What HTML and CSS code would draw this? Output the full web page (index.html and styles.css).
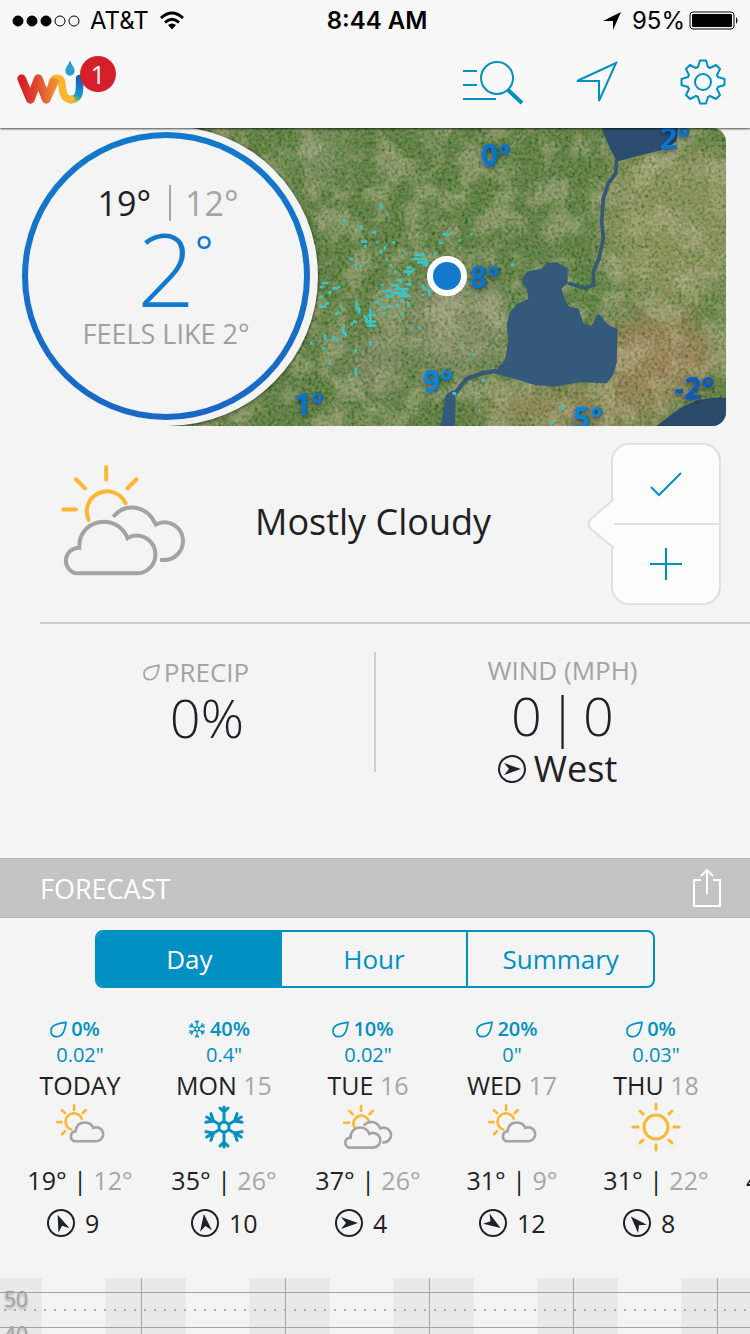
FILE: index.html
```html
<!DOCTYPE html>
<html lang="en">
<head>
  <meta charset="UTF-8">
  <meta name="viewport" content="width=device-width, initial-scale=1">
  <title>Weather</title>
  <link rel="stylesheet" href="styles.css">
</head>
<body>

  <!-- shared icons -->
  <svg class="sprite" aria-hidden="true">
    <symbol id="drop" viewBox="142 33 51 49">
      <path d="M190 36C170 38 145 44 145 61C145 72 152 79 163 79C181 79 187 60 190 36Z"/>
    </symbol>
    <symbol id="snow" viewBox="-22 -22 44 44">
      <circle r="5"/>
      <path d="M0-6V-20M-4-19L0-15L4-19"/>
      <path transform="rotate(60)" d="M0-6V-20M-5-18L0-12L5-18"/>
      <path transform="rotate(120)" d="M0-6V-20M-5-18L0-12L5-18"/>
      <path transform="rotate(180)" d="M0-6V-20M-4-19L0-15L4-19"/>
      <path transform="rotate(240)" d="M0-6V-20M-5-18L0-12L5-18"/>
      <path transform="rotate(300)" d="M0-6V-20M-5-18L0-12L5-18"/>
    </symbol>
    <symbol id="mostly-cloudy" viewBox="180 80 385 350">
      <path class="sun" d="M377 203A60 60 0 1 0 266 253M319 94V132M228 131L255 158M410 131L383 158M190 222H228"/>
      <path class="cloud" d="M228 414A39 39 0 0 1 238 337C236 290 270 259 312 259C345 259 372 280 383 308C392 302 400 300 410 300A57 57 0 0 1 410 414Z"/>
      <path class="cloud butt" d="M340 244C375 202 440 206 468 267C478 262 485 260 493 260A57 57 0 0 1 493 374H481"/>
    </symbol>
    <symbol id="partly-cloudy" viewBox="162 276 155 150">
      <path class="sun" d="M245 325A26 26 0 1 0 212 359M221 284V298M184 299L193 308M257 299L248 308M169 336H182M184 373L193 364"/>
      <path class="cloud" d="M222 395A16 16 0 0 1 226 364C228 345 240 337 254 337C268 337 277 345 281 354C285 352 288 352 290 352A21 21 0 0 1 290 395Z"/>
    </symbol>
    <symbol id="sunny" viewBox="-25 -25 50 50">
      <path class="sun" d="M12 0A12 12 0 1 1-12 0A12 12 0 1 1 12 0M0-23V-18M0 23V18M-23 0H-18M23 0H18M-16-16L-13-13M16-16L13-13M-16 16L-13 13M16 16L13 13"/>
    </symbol>
    <symbol id="arrow" viewBox="-12 -12 24 24">
      <path d="M9 0L-8-6L-3 0L-8 6Z"/>
    </symbol>
  </svg>

  <header class="top">
    <div class="status">
      <div class="carrier">
        <svg width="68" height="14" viewBox="0 0 68 14">
          <g stroke="#000" stroke-width="1"><circle cx="6" cy="7" r="5"/><circle cx="20" cy="7" r="5"/><circle cx="34" cy="7" r="5"/>
          <circle cx="48" cy="7" r="5" fill="none"/><circle cx="62" cy="7" r="5" fill="none"/></g>
        </svg>
        <span>AT&amp;T</span>
        <svg width="26" height="20" viewBox="0 0 26 20">
          <path d="M2 7Q13-3 24 7M6 11.500Q13 5 20 11.500" fill="none" stroke="#000" stroke-width="3"/>
          <path d="M9 14Q13 11 17 14L13 18.500Z"/>
        </svg>
      </div>
      <time>8:44 AM</time>
      <div class="battery">
        <svg width="20" height="20" viewBox="0 0 20 20"><path d="M19 1L1 10H11V19Z"/></svg>
        <span>95%</span>
        <svg width="49" height="20" viewBox="0 0 49 20">
          <rect x="1" y="1" width="44" height="17" rx="3" fill="none" stroke="#000"/>
          <rect x="3" y="3" width="40" height="13" rx="1"/>
          <path d="M47 6Q50 9.500 47 13Z"/>
        </svg>
      </div>
    </div>

    <nav class="toolbar">
      <a class="logo" href="#" aria-label="Weather Underground">
        <svg width="68" height="48" viewBox="52 166 204 144" fill="none" stroke-linecap="round" stroke-linejoin="round">
          <defs>
            <linearGradient id="w" x1="0" x2="1"><stop offset="0" stop-color="#d6202a"/><stop offset=".55" stop-color="#e2502f"/><stop offset="1" stop-color="#f08a35"/></linearGradient>
            <linearGradient id="u" gradientUnits="userSpaceOnUse" x1="214" y1="290" x2="240" y2="230"><stop offset="0" stop-color="#9cc23c"/><stop offset=".3" stop-color="#1b9bd0"/><stop offset="1" stop-color="#1264b0"/></linearGradient>
          </defs>
          <path d="M214 291C238 290 241 274 240 228" stroke="url(#u)" stroke-width="23"/>
          <path d="M158 238C164 224 182 222 186 240C190 262 187 289 214 291" stroke="#fbb52e" stroke-width="23"/>
          <path d="M66 228L92 290L116 228L140 290L163 238" stroke="url(#w)" stroke-width="26"/>
          <path d="M211 171C213 184 225 193 225 205A14 14 0 0 1 197 205C197 193 209 184 211 171Z" fill="#2aa0cd"/>
        </svg>
        <span class="badge">1</span>
      </a>
      <button class="tool" aria-label="Search">
        <svg width="62" height="46" viewBox="0 0 62 46" fill="none" stroke="#0090c1" stroke-width="2">
          <path d="M1 12H15M1 26H15M1 40H34"/><circle cx="35" cy="19" r="16"/><path d="M46 31L60 44" stroke-width="4"/>
        </svg>
      </button>
      <button class="tool" aria-label="Locate">
        <svg width="46" height="46" viewBox="0 0 46 46" fill="none" stroke="#0090c1" stroke-width="2">
          <path d="M42 4L3 22H25V42Z"/>
        </svg>
      </button>
      <button class="tool settings" aria-label="Settings">
        <svg width="46" height="46" viewBox="-23 -23 46 46" fill="none" stroke="#0090c1" stroke-width="2" stroke-linejoin="round">
          <circle r="8"/>
          <path d="M-5-15L-3-21.500H3L5-15L7-14L13-17L17-13L14-7L15-5L21.500-3V3L15 5L14 7L17 13L13 17L7 14L5 15L3 21.500H-3L-5 15L-7 14L-13 17L-17 13L-14 7L-15 5L-21.500 3V-3L-15-5L-14-7L-17-13L-13-17L-7-14Z"/>
        </svg>
      </button>
    </nav>
  </header>

  <section class="hero">
    <div class="map">
      <svg class="terrain" viewBox="-627 9 1680 894" preserveAspectRatio="xMaxYMid slice">
        <defs>
          <filter id="grain" x="0" y="0" width="100%" height="100%">
            <feTurbulence type="fractalNoise" baseFrequency=".1" numOctaves="4" seed="8"/>
            <feColorMatrix values="1.500 .3 0 0 -.54  .8 .6 0 0 -.26  .9 0 .3 0 -.36  0 0 0 0 1"/>
          </filter>
          <filter id="patches" x="0" y="0" width="100%" height="100%">
            <feTurbulence type="fractalNoise" baseFrequency=".012" numOctaves="5" seed="3"/>
            <feColorMatrix values="0 0 0 0 .62  0 0 0 0 .52  0 0 0 0 .36  4 0 0 0 -1.700"/>
          </filter>
          <filter id="soft" x="-50%" y="-50%" width="200%" height="200%"><feGaussianBlur stdDeviation="40"/></filter>
        </defs>
        <rect x="-627" y="9" width="1680" height="894" fill="#466a2a"/>
        <g filter="url(#soft)">
          <ellipse cx="900" cy="300" rx="220" ry="260" fill="#7c8249"/>
          <ellipse cx="850" cy="690" rx="180" ry="120" fill="#967046"/>
          <ellipse cx="600" cy="850" rx="300" ry="60" fill="#8b7545"/>
          <ellipse cx="240" cy="590" rx="160" ry="150" fill="#787f5b"/>
          <ellipse cx="-160" cy="90" rx="50" ry="80" fill="#7d8a62"/>
          <ellipse cx="0" cy="720" rx="80" ry="110" fill="#717954"/>
          <ellipse cx="650" cy="490" rx="80" ry="60" fill="#3d6e26"/>
        </g>
        <rect x="-627" y="9" width="1680" height="894" filter="url(#patches)" opacity=".4"/>
        <rect x="-627" y="9" width="1680" height="894" filter="url(#grain)" opacity=".32"/>
        <g fill="#34597a">
          <path d="M515 414L545 412L578 430V475L560 490L568 520L582 545L610 550L625 595L650 602L670 565L700 600L728 612L725 715L715 750L695 775L610 772L540 785L480 780L420 762L355 745L390 705L400 650L395 600L405 560L430 535L460 522L455 490L440 470L455 440L500 430Z"/>
          <path d="M680 9L700 60L725 110L780 95L860 75L905 50L910 9Z" fill="#2b4e70"/>
          <path d="M845 903L900 860Q960 815 1053 818V903Z" fill="#294b69"/>
          <path d="M197 903L212 810L235 795L242 820L240 903Z"/>
        </g>
        <g fill="none" stroke="#355874">
          <path d="M725 105L722 145L700 175L685 220L680 290L685 340L672 400L655 440L655 480L630 490L580 475" stroke-width="11"/>
          <path d="M365 737L320 745L275 762L240 805" stroke-width="13"/>
        </g>
        <!-- radar echoes -->
        <g fill="none" stroke="#3cc5c4" stroke-width="8">
          <path d="M18 237v16M34 268h7M4 352h6M30 362v12M52 352h8M18 374v12M83 377h6M203 328h22M191 354h14M286 328h7M250 346h6M181 381v8M32 404h6M42 420h9M58 440h7M408 419h10M106 610h6M130 610h7M262 660h6M292 689h7M322 767h7M310 856h6M526 892h12M552 843l14 10M232 805h12"/>
          <path d="M120 390h22l6-6M112 402h34M126 412h30l-8-14M144 420h14M94 428h16M86 440h24l8-10M96 448h10M66 465h12v10M48 482h18l6 14M60 492h40M20 498h30M46 504h44l-10-12M70 512h34M32 514h22M76 528h10M100 530v16M0 532h14M64 540h8M18 546h16M42 544h10M80 562v10M24 566h7M92 478h18M140 480l14 14M160 492l6 20M140 510h8M18 480h8"/>
          <path d="M-98 288h12M-42 300v14M-10 322h14M-42 350h18M-30 360v10M-78 402h12M-62 420h8M-48 424h8M-160 474h20M-166 486h12M-128 490h18M-142 502h12M-112 488l8-4M-170 516h14M-165 545h18M-150 535h12M-106 545h8M-118 570l10-10M-55 530v26M-48 546v20M-22 570h26M-30 590h32M-24 602h26M-14 550v50M-34 570l14 20M-66 590h12M-74 598h8M-96 604v24M-88 620v14M-150 628v16M-124 632v14M-118 642h10M-14 648v14M-158 670h8M-58 672v12M-136 710v10M-58 730v20M-195 655h8"/>
        </g>
      </svg>
      <span class="pin t2">2°</span>
      <span class="pin t0">0°</span>
      <span class="pin t8">8°</span>
      <span class="pin t9">9°</span>
      <span class="pin t1">1°</span>
      <span class="pin t5">5°</span>
      <span class="pin tm2">-2°</span>
      <span class="here"></span>
    </div>
    <div class="gauge">
      <p class="hilo"><span>19°</span><span class="low">12°</span></p>
      <p class="now">2<sup>°</sup></p>
      <p class="feels">FEELS LIKE 2°</p>
    </div>
  </section>

  <section class="condition">
    <svg class="big-icon"><use href="#mostly-cloudy"/></svg>
    <h1>Mostly Cloudy</h1>
    <div class="confirm">
      <svg class="beak" width="27" height="52" viewBox="0 0 27 52"><path d="M27 1L4 21Q-1 26 4 31L27 50" fill="#fcfcfc" stroke="#dfdfdf" stroke-width="2"/></svg>
      <button aria-label="Confirm"><svg width="32" height="32" viewBox="0 0 32 32"><path d="M1 19L9 27L31 5"/></svg></button>
      <button aria-label="Add report"><svg width="32" height="32" viewBox="0 0 32 32"><path d="M16 0V32M0 16H32"/></svg></button>
    </div>
  </section>

  <section class="stats">
    <div class="stat precip">
      <h2><svg class="drop"><use href="#drop"/></svg>PRECIP</h2>
      <p class="value">0%</p>
    </div>
    <div class="stat wind-now">
      <h2>WIND (MPH)</h2>
      <p class="value"><span>0</span><span>|</span><span>0</span></p>
      <p class="direction"><svg class="compass"><use href="#arrow"/></svg>West</p>
    </div>
  </section>

  <section class="forecast">
    <div class="bar">
      <h2>FORECAST</h2>
      <button aria-label="Share">
        <svg width="30" height="40" viewBox="0 0 30 40" fill="none" stroke="#fff" stroke-width="2">
          <path d="M9 12H2V38H28V12H21M15 26V2M9 8L15 2L21 8"/>
        </svg>
      </button>
    </div>

    <div class="tabs">
      <button class="active">Day</button>
      <button>Hour</button>
      <button>Summary</button>
    </div>

    <ul class="days">
      <li>
        <p class="chance"><svg class="drop"><use href="#drop"/></svg>0%</p>
        <p class="amount">0.02"</p>
        <h3>TODAY</h3>
        <svg class="icon partly"><use href="#partly-cloudy"/></svg>
        <p class="temps">19° | <span>12°</span></p>
        <p class="wind"><svg class="compass"><use href="#arrow" transform="rotate(-112 12 12)"/></svg>9</p>
      </li>
      <li>
        <p class="chance"><svg class="flake"><use href="#snow"/></svg>40%</p>
        <p class="amount">0.4"</p>
        <h3>MON <span>15</span></h3>
        <svg class="icon snowy"><use href="#snow"/></svg>
        <p class="temps">35° | <span>26°</span></p>
        <p class="wind"><svg class="compass"><use href="#arrow" transform="rotate(-97 12 12)"/></svg>10</p>
      </li>
      <li>
        <p class="chance"><svg class="drop"><use href="#drop"/></svg>10%</p>
        <p class="amount">0.02"</p>
        <h3>TUE <span>16</span></h3>
        <svg class="icon mostly"><use href="#mostly-cloudy"/></svg>
        <p class="temps">37° | <span>26°</span></p>
        <p class="wind"><svg class="compass"><use href="#arrow"/></svg>4</p>
      </li>
      <li>
        <p class="chance"><svg class="drop"><use href="#drop"/></svg>20%</p>
        <p class="amount">0"</p>
        <h3>WED <span>17</span></h3>
        <svg class="icon partly"><use href="#partly-cloudy"/></svg>
        <p class="temps">31° | <span>9°</span></p>
        <p class="wind"><svg class="compass"><use href="#arrow" transform="rotate(33 12 12)"/></svg>12</p>
      </li>
      <li>
        <p class="chance"><svg class="drop"><use href="#drop"/></svg>0%</p>
        <p class="amount">0.03"</p>
        <h3>THU <span>18</span></h3>
        <svg class="icon sunny"><use href="#sunny"/></svg>
        <p class="temps">31° | <span>22°</span></p>
        <p class="wind"><svg class="compass"><use href="#arrow" transform="rotate(-133 12 12)"/></svg>8</p>
      </li>
      <li class="next"><p class="temps">4</p></li>
    </ul>

    <div class="chart">
      <div class="grid-row">50</div>
      <div class="grid-row">40</div>
    </div>
  </section>

</body>
</html>
```

FILE: styles.css
```css
* {
  box-sizing: border-box;
  margin: 0;
  padding: 0;
}
html {
  overflow: hidden;
}
body {
  font-family: "Open Sans", "Noto Sans", sans-serif;
  background: #f4f4f4;
  color: #1f2124;
  height: 100vh;
  display: flex;
  flex-direction: column;
  overflow: hidden;
}
button {
  font: inherit;
  color: inherit;
  background: none;
  border: 0;
}
svg {
  display: block;
  flex: none;
}
h1, h2, h3 {
  font-weight: 400;
}
.sprite {
  position: absolute;
  width: 0;
  height: 0;
}

/* status bar and toolbar */
.top {
  position: relative;
  z-index: 2;
  flex: none;
  height: 128px;
  background: #f8f8f8;
  box-shadow: 0 1px 2px rgba(0, 0, 0, 0.7);
}
.status {
  display: grid;
  grid-template-columns: 1fr auto 1fr;
  height: 42px;
  padding: 0 12px;
  font: 24px/42px Inter, Roboto, sans-serif;
  color: #000;
}
.status time {
  padding-left: 4px;
  font-weight: 600;
}
.carrier, .battery {
  display: flex;
  align-items: center;
  gap: 10px;
}
.battery {
  justify-content: flex-end;
  gap: 4px;
}
.battery svg:first-child {
  margin-right: 6px;
}
.toolbar {
  display: flex;
  align-items: center;
  gap: 50px;
  height: 80px;
  padding: 0 24px 0 17px;
}
.settings {
  margin-left: 10px;
}
.logo {
  position: relative;
  margin-right: auto;
}
.badge {
  position: absolute;
  left: 63px;
  top: -2px;
  width: 36px;
  height: 36px;
  border-radius: 50%;
  background: #d51f2b;
  color: #fff;
  font-size: 26px;
  line-height: 36px;
  text-align: center;
}

/* map and current temperature */
.hero {
  position: relative;
  flex: none;
  padding: 0 24px 0 166px;
}
.map {
  position: relative;
  height: 298px;
  overflow: hidden;
  border-radius: 0 14px 14px 0;
}
.terrain {
  width: 100%;
  height: 100%;
}
.map::after {
  content: "";
  position: absolute;
  left: -148px;
  top: -2px;
  width: 300px;
  height: 300px;
  border-radius: 50%;
  background: #f4f4f4;
  box-shadow: 0 1px 4px rgba(0, 0, 0, 0.6);
}
.pin {
  position: absolute;
  font-size: 30px;
  font-weight: 700;
  line-height: 30px;
  color: #0a74cc;
  text-shadow: 0 2px 4px rgba(0, 20, 60, 0.6);
}
.t0 { right: 215px; top: 12px; }
.t2 { right: 36px; top: -5px; }
.t8 { right: 226px; top: 134px; }
.t9 { right: 273px; top: 238px; color: #0a84d8; }
.t1 { right: 402px; top: 261px; }
.t5 { right: 123px; top: 275px; color: #0a84d8; }
.tm2 { right: 12px; top: 245px; color: #0a5cc4; }
.here {
  position: absolute;
  right: 259px;
  top: 128px;
  width: 40px;
  height: 40px;
  border: 6px solid #fff;
  border-radius: 50%;
  background: #1279cc;
}
.gauge {
  position: absolute;
  z-index: 1;
  left: 22px;
  top: 4px;
  width: 288px;
  height: 288px;
  padding-top: 47px;
  border: 6px solid transparent;
  border-radius: 50%;
  background: linear-gradient(#f4f4f4, #f4f4f4) padding-box, linear-gradient(#1279cc, #1a67c6) border-box;
  text-align: center;
}
.hilo {
  display: flex;
  justify-content: center;
  padding-left: 4px;
  font-size: 34px;
  line-height: 36px;
  height: 36px;
}
.hilo .low {
  margin-left: 18px;
  padding-left: 14px;
  border-left: 2px solid #a6a6a6;
  color: #a6a6a6;
}
.now {
  display: flex;
  justify-content: center;
  padding-left: 18px;
  color: #1279cc;
  font-size: 102px;
  font-weight: 300;
  line-height: 94px;
}
.now sup {
  font-size: 42px;
  font-weight: 400;
  line-height: 60px;
}
.feels {
  color: #a0a0a0;
  font-size: 27px;
  line-height: 38px;
}

/* conditions */
.condition {
  flex: none;
  display: flex;
  align-items: center;
  height: 198px;
  margin-left: 40px;
  padding: 0 29px 0 20px;
  border-bottom: 2px solid #cfcfcf;
}
.big-icon {
  --line: 12px;
  width: 128px;
  height: 117px;
  margin-bottom: 8px;
}
.condition h1 {
  flex: 1;
  margin: 0 0 4px 67px;
  font-size: 36px;
  line-height: 48px;
}
.sun, .cloud {
  fill: none;
  stroke: #fdb62f;
  stroke-width: var(--line);
  stroke-linecap: round;
}
.cloud {
  stroke: #a3a3a3;
}
.butt {
  stroke-linecap: butt;
}
.confirm {
  position: relative;
  width: 110px;
  border: 2px solid #dfdfdf;
  border-radius: 18px;
  background: #fcfcfc;
}
.confirm button {
  display: flex;
  align-items: center;
  justify-content: center;
  width: 100%;
  height: 78px;
}
.confirm button + button {
  height: 80px;
  border-top: 2px solid #dfdfdf;
}
.confirm button path {
  fill: none;
  stroke: #0090c1;
  stroke-width: 2px;
}
.beak {
  position: absolute;
  left: -26px;
  top: 53px;
}

/* precip and wind */
.stats {
  flex: none;
  display: grid;
  grid-template-columns: 1fr 1fr;
  height: 234px;
  padding-top: 28px;
}
.stat {
  height: 120px;
  text-align: center;
}
.precip {
  margin-right: -1px;
  padding: 2px 0 0 40px;
  border-right: 2px solid #cfcfcf;
}
.stat h2 {
  display: flex;
  align-items: center;
  justify-content: center;
  gap: 4px;
  color: #a3a3a3;
  font-size: 26px;
  line-height: 36px;
}
.precip h2 {
  padding-right: 22px;
}
.stat .value {
  display: flex;
  justify-content: center;
  gap: 6px;
  font-size: 54px;
  font-weight: 300;
  line-height: 54px;
}
.direction {
  display: flex;
  align-items: center;
  justify-content: center;
  gap: 8px;
  padding-right: 10px;
  font-size: 36px;
  line-height: 54px;
}
.drop {
  width: 17px;
  height: 17px;
  fill: none;
  stroke: currentColor;
  stroke-width: 5px;
}
.compass {
  width: 28px;
  height: 28px;
  border: 2px solid #1f2124;
  border-radius: 50%;
  fill: #1f2124;
}

/* forecast */
.forecast {
  flex: 1;
  min-height: 0;
  display: flex;
  flex-direction: column;
}
.bar {
  flex: none;
  display: flex;
  align-items: center;
  justify-content: space-between;
  height: 60px;
  padding: 0 28px 0 40px;
  border: solid #b5b5b5;
  border-width: 1px 0;
  background: #c4c4c4;
  color: #fff;
}
.bar h2 {
  font-size: 27px;
}
.tabs {
  flex: none;
  display: flex;
  height: 58px;
  margin: 12px 95px 0;
  border: 2px solid #0090c1;
  border-radius: 8px;
  overflow: hidden;
}
.tabs button {
  flex: 1;
  color: #0090c1;
  font-size: 26px;
}
.tabs button + button + button {
  border-left: 2px solid #0090c1;
}
.tabs .active {
  background: #0090c1;
  color: #fff;
}
.days {
  flex: none;
  display: grid;
  grid-template-columns: repeat(6, 144px);
  height: 290px;
  padding: 28px 0 0 8px;
  list-style: none;
  overflow: hidden;
}
.days li {
  display: flex;
  flex-direction: column;
  align-items: center;
}
.chance, .amount {
  display: flex;
  align-items: center;
  gap: 4px;
  color: #0090c1;
  font-size: 20px;
  line-height: 26px;
}
.chance {
  padding-right: 10px;
  font-weight: 600;
}
.flake {
  width: 18px;
  height: 18px;
}
#snow {
  fill: none;
  stroke: #0090c1;
  stroke-width: 3px;
  stroke-linecap: round;
}
.days h3 {
  font-size: 25px;
  font-weight: 500;
  line-height: 34px;
}
.days span {
  color: #a6a6a6;
  font-weight: 400;
}
.icon {
  width: 50px;
  height: 50px;
  margin: 0 0 9px;
}
.partly { --line: 8px; }
.mostly { --line: 20px; }
.sunny { --line: 3px; }
.snowy {
  padding: 3px;
}
.temps {
  font-size: 25px;
  font-weight: 500;
  line-height: 38px;
}
.wind {
  display: flex;
  align-self: flex-start;
  align-items: center;
  gap: 10px;
  padding-left: 39px;
  font-size: 25px;
  font-weight: 500;
  line-height: 48px;
}
.next {
  padding: 145px 0 0 18px;
}
.days .next {
  align-items: flex-start;
}

/* hourly chart, runs on below the fold */
.chart {
  flex: 1;
  overflow: hidden;
  padding-top: 14px;
  background:
    linear-gradient(90deg, #a6a6a6 1px, transparent 1px) 141px 0 / 144px 100%,
    linear-gradient(90deg, #e9e9e9 81px, transparent 81px) 105px 0 / 144px 100%;
}
.grid-row {
  height: 35px;
  padding-left: 4px;
  border-top: 1px solid #a3a3a3;
  background: radial-gradient(circle, #aaa 1px, transparent 1px) 0 12px / 10px 10px repeat-x;
  color: #a3a3a3;
  font-size: 21px;
  line-height: 12px;
  text-shadow: 0 2px 3px rgba(0, 0, 0, 0.3);
}
```
